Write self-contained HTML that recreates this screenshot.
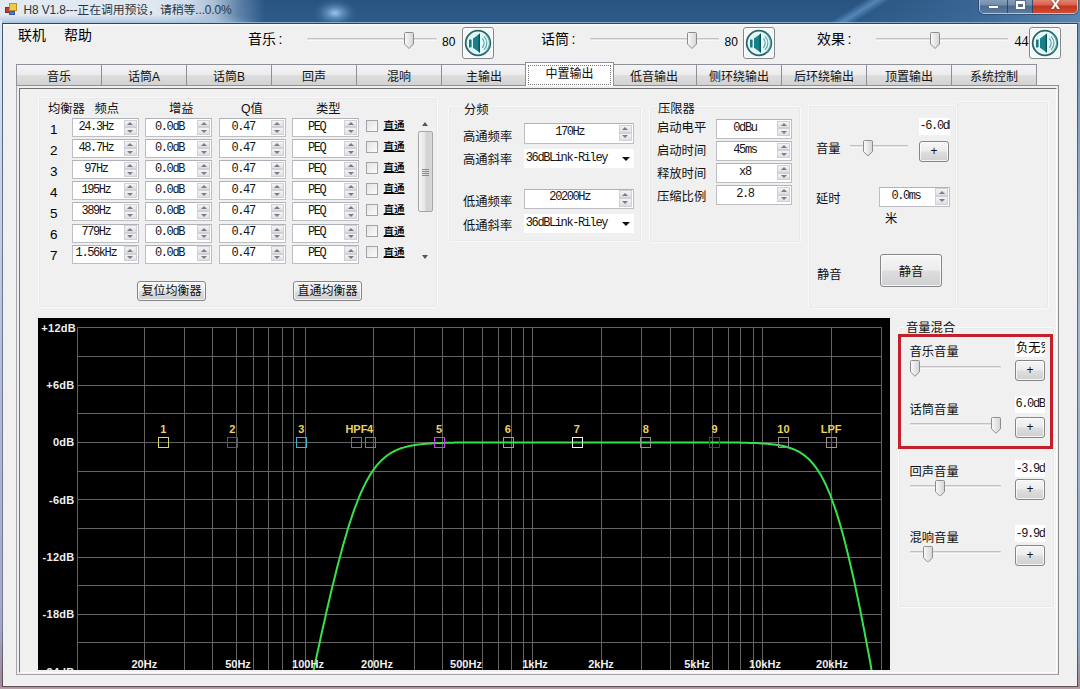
<!DOCTYPE html><html lang="zh-CN"><head><meta charset="utf-8"><title>H8 V1.8</title><style>
html,body{margin:0;padding:0}
body{width:1080px;height:689px;overflow:hidden;position:relative;background:#d9dde3;font-family:"Liberation Sans","Noto Sans CJK SC",sans-serif;font-size:12.3px;color:#000}
.a,body div,body span,body svg{position:absolute;box-sizing:border-box}
.l{white-space:nowrap;height:16px;line-height:16px;font-size:12.3px;color:#111}
.m{font-family:"Liberation Mono","Noto Sans CJK SC",monospace;font-size:12px;letter-spacing:-1.4px;white-space:nowrap;color:#151515}
.sp{background:#fff;border:1px solid #bcbec4;border-top-color:#b0b2b9}
.sp .v{left:0;top:0;height:14px;line-height:14px;text-align:center}
.sb{width:13px;height:8px;background:linear-gradient(#f4f4f6,#dfdfe3);border:1px solid #d0d0d6}
.sb i{position:absolute;left:2.5px;width:0;height:0;border-left:3px solid transparent;border-right:3px solid transparent}
.sb.u i{top:1.5px;border-bottom:3.5px solid #7c7c86}
.sb.d i{top:1.5px;border-top:3.5px solid #7c7c86}
.tab{top:63.5px;height:21.5px;width:86px;border:1px solid #8e9199;border-bottom:none;background:linear-gradient(#f4f4f4 0,#ececec 48%,#dedede 52%,#d2d2d2 100%);text-align:center;line-height:24px;font-size:12px;color:#111;white-space:nowrap}
.btn{border:1px solid #84868c;border-radius:3px;background:linear-gradient(#f6f6f6 0,#ececec 48%,#dedede 52%,#d0d0d0 100%);box-shadow:inset 0 0 0 1px rgba(255,255,255,.75);text-align:center;white-space:nowrap;color:#111}
.tr{height:3px;background:#e2e2e2;border-top:1px solid #c2c2c2;border-bottom:1px solid #f9f9f9;border-radius:1px}
.th{width:10px;height:17px}
.gb{border:1px solid #f9f9f9;box-shadow:0 0 0 1px #e9e9e9 inset;border-radius:2px}
.cb{width:12px;height:12px;border:1px solid #a0a3a8;background:linear-gradient(135deg,#e4e4e4,#fbfbfb)}
.tb{background:#fff;overflow:hidden}
.gl{font:bold 11px "Liberation Sans",sans-serif;fill:#f0f0f0}
.ml{font:bold 11px "Liberation Sans",sans-serif;fill:#ecd060}
</style></head><body>
<div style="left:0;top:0;width:1080px;height:689px;background:linear-gradient(180deg,#2a4f7a 0,#2b4c74 90px,#8c9aaa 220px,#cfd4da 420px,#e2e2e6 640px,#d9c7cc 689px)"></div>
<div style="left:0;top:0;width:1080px;height:24px;overflow:hidden;background:linear-gradient(180deg,#295481 0,#2b5886 60%,#2d5b8a 100%)"><div style="left:860px;top:0;width:220px;height:22px;background:linear-gradient(90deg,rgba(90,135,185,0) 0,rgba(90,135,185,.3) 50%,rgba(120,160,200,.6) 100%)"></div><div style="left:853px;top:-24px;width:14px;height:70px;transform:rotate(58deg);transform-origin:50% 50%;background:linear-gradient(90deg,rgba(110,165,215,0) 0,rgba(110,165,215,.6) 50%,rgba(110,165,215,0) 100%)"></div><div style="left:313px;top:-1px;width:44px;height:28px;background:radial-gradient(ellipse at center,rgba(160,205,240,.95) 0,rgba(130,180,225,.55) 25%,rgba(100,150,200,.2) 50%,rgba(100,150,200,0) 70%)"></div><div style="left:-10px;top:-2px;width:275px;height:27px;background:linear-gradient(90deg,#e3ebf3 0,#dfe8f1 60%,rgba(214,225,237,.96) 72%,rgba(190,207,226,.85) 82%,rgba(150,178,208,.5) 90%,rgba(110,150,195,0) 100%)"></div><div style="left:0;top:15px;width:255px;height:8px;background:linear-gradient(180deg,rgba(160,190,220,0) 0,rgba(160,190,220,.85) 100%);-webkit-mask-image:linear-gradient(90deg,#000 0,#000 80%,transparent 100%);mask-image:linear-gradient(90deg,#000 0,#000 80%,transparent 100%)"></div><div style="left:0;top:22px;width:1080px;height:1px;background:rgba(170,195,220,.75)"></div><div style="left:2px;top:23px;width:1076px;height:1px;background:#2a4666"></div></div>
<div style="left:0;top:686px;width:1080px;height:3px;background:linear-gradient(180deg,#5a4a54 0,#6a5860 30%,#b0959d 45%,#bca4ac 100%)"></div>
<div style="left:0;top:20px;width:2px;height:667px;background:linear-gradient(180deg,#dfe8f1 0,#ccd8e8 120px,#b4bcd8 350px,#a4a8cc 600px,#a08c9c 660px)"></div>
<div style="left:2px;top:23px;width:1px;height:664px;background:linear-gradient(180deg,#3a5676 0,#66788e 200px,#747c94 600px,#5a4a54 664px)"></div>
<div style="left:1078px;top:23px;width:2px;height:664px;background:linear-gradient(180deg,#6f92b6 0,#8aa4c2 120px,#a8b8cc 300px,#8eaac8 620px,#a08c98 660px)"></div>
<div style="left:1077px;top:23px;width:1px;height:664px;background:linear-gradient(180deg,#3a5070 0,#5a6c86 200px,#566a86 600px,#5a4a54 664px)"></div>
<div style="left:4px;top:3px;width:14px;height:13px"><div style="left:1px;top:4px;width:5px;height:6px;background:#b8402a;border:1px solid #8a2a18"></div><div style="left:5px;top:0;width:8px;height:8px;background:#eccb48;border:1px solid #b89030"></div><div style="left:5px;top:8px;width:6px;height:4px;background:#4a78cc;border:1px solid #3558a8"></div></div>
<div style="left:23.5px;top:2px;height:16px;line-height:16px;font-size:11.9px;letter-spacing:-0.1px;color:#2c3640;white-space:nowrap">H8 V1.8---正在调用预设，请稍等...0.0%</div>
<div style="left:979px;top:-4px;width:99px;height:18px;border:1px solid rgba(225,235,248,.7);border-radius:0 0 5px 5px;overflow:hidden;box-shadow:0 0 0 1px rgba(30,45,70,.45)"><div style="left:0;top:0;width:27.5px;height:18px;background:linear-gradient(#90a6c0 0,#718cab 45%,#4c6a90 50%,#5f7fa5 100%);border-right:1px solid rgba(35,50,80,.7)"><div style="left:8px;top:8px;width:11px;height:4px;background:#fff;border:1px solid #5a6c86;border-radius:1px"></div></div><div style="left:27.5px;top:0;width:25.5px;height:18px;background:linear-gradient(#90a6c0 0,#718cab 45%,#4c6a90 50%,#5f7fa5 100%);border-right:1px solid rgba(35,50,80,.7)"><div style="left:8px;top:4px;width:9px;height:8px;border:2px solid #fff;border-top-width:3px;background:#5a6c86;box-shadow:0 0 0 1px #5a6c86"></div></div><div style="left:53px;top:0;width:45px;height:18px;background:linear-gradient(#e59a8a 0,#d8604a 45%,#c4341e 50%,#d25436 100%)"><div style="left:0;top:-1px;width:45px;height:15px;text-align:center;color:#fff;font:bold 16px/15px 'Liberation Sans',sans-serif;text-shadow:0 0 2px #5a1a10">x</div></div></div>
<div style="left:3px;top:24px;width:1074px;height:662px;background:#f0f0f0"></div>
<div style="left:3px;top:24px;width:1074px;height:3px;background:linear-gradient(180deg,#fbfbfb,#f0f0f0)"></div>
<div style="left:18px;top:26px;height:18px;font-size:14px;line-height:18px;white-space:nowrap">联机</div>
<div style="left:64px;top:26px;height:18px;font-size:14px;line-height:18px;white-space:nowrap">帮助</div>
<div style="left:248px;top:30px;height:18px;font-size:14px;line-height:18px;white-space:nowrap;letter-spacing:0">音乐<span style="position:static;margin-left:2.5px">:</span></div>
<div class="tr" style="left:307px;top:37.8px;width:130px;height:3px;"></div><svg class="th" preserveAspectRatio="none" style="left:404px;top:32.4px;height:17px" viewBox="0 0 10 17"><defs><linearGradient id="tg" x1="0" x2="1"><stop offset="0" stop-color="#fafafa"/><stop offset="1" stop-color="#d4d4d4"/></linearGradient></defs><path d="M1.5 0.5h7a1 1 0 0 1 1 1v10.5l-4.5 4.5l-4.5-4.5v-10.5a1 1 0 0 1 1-1z" fill="url(#tg)" stroke="#8a8c92" stroke-width="1"/></svg>
<div style="left:442px;top:33.5px;height:16px;line-height:16px;white-space:nowrap;font-size:12px;">80</div>
<div class="btn" style="left:462px;top:27px;width:32px;height:32px;background:#f3f9f9;border-color:#85888a"><svg style="left:1px;top:1px" width="28" height="28" viewBox="-14 -14 28 28"><circle r="12.3" fill="#e2f7f7" stroke="#2c666a" stroke-width="1.8"/><rect x="-9" y="-3.6" width="2.6" height="8" rx="0.6" fill="#1c7880"/><path d="M-5 -4.4L2 -9.6V9.8L-5 4.8Z" fill="#17808a"/><path d="M0.6 -8.6L2 -9.6V9.8L0.6 8.8Z" fill="#0c5058"/><path d="M4.2 -4.6A6.5 6.5 0 0 1 4.2 4.8M6 -6.6A9.2 9.2 0 0 1 6 6.8M7.8 -8.4A11.6 11.6 0 0 1 7.8 8.6" fill="none" stroke="#5aa4a6" stroke-width="1.1"/></svg></div>
<div style="left:541px;top:30px;height:18px;font-size:14px;line-height:18px;white-space:nowrap;letter-spacing:0">话筒<span style="position:static;margin-left:2.5px">:</span></div>
<div class="tr" style="left:589.5px;top:37.8px;width:129.5px;height:3px;"></div><svg class="th" preserveAspectRatio="none" style="left:686.8px;top:32.4px;height:17px" viewBox="0 0 10 17"><defs><linearGradient id="tg" x1="0" x2="1"><stop offset="0" stop-color="#fafafa"/><stop offset="1" stop-color="#d4d4d4"/></linearGradient></defs><path d="M1.5 0.5h7a1 1 0 0 1 1 1v10.5l-4.5 4.5l-4.5-4.5v-10.5a1 1 0 0 1 1-1z" fill="url(#tg)" stroke="#8a8c92" stroke-width="1"/></svg>
<div style="left:724.5px;top:33.5px;height:16px;line-height:16px;white-space:nowrap;font-size:12px;">80</div>
<div class="btn" style="left:742.5px;top:27px;width:32px;height:32px;background:#f3f9f9;border-color:#85888a"><svg style="left:1px;top:1px" width="28" height="28" viewBox="-14 -14 28 28"><circle r="12.3" fill="#e2f7f7" stroke="#2c666a" stroke-width="1.8"/><rect x="-9" y="-3.6" width="2.6" height="8" rx="0.6" fill="#1c7880"/><path d="M-5 -4.4L2 -9.6V9.8L-5 4.8Z" fill="#17808a"/><path d="M0.6 -8.6L2 -9.6V9.8L0.6 8.8Z" fill="#0c5058"/><path d="M4.2 -4.6A6.5 6.5 0 0 1 4.2 4.8M6 -6.6A9.2 9.2 0 0 1 6 6.8M7.8 -8.4A11.6 11.6 0 0 1 7.8 8.6" fill="none" stroke="#5aa4a6" stroke-width="1.1"/></svg></div>
<div style="left:817px;top:30px;height:18px;font-size:14px;line-height:18px;white-space:nowrap;letter-spacing:0">效果<span style="position:static;margin-left:2.5px">:</span></div>
<div class="tr" style="left:876px;top:37.8px;width:131.5px;height:3px;"></div><svg class="th" preserveAspectRatio="none" style="left:929.5px;top:32.4px;height:17px" viewBox="0 0 10 17"><defs><linearGradient id="tg" x1="0" x2="1"><stop offset="0" stop-color="#fafafa"/><stop offset="1" stop-color="#d4d4d4"/></linearGradient></defs><path d="M1.5 0.5h7a1 1 0 0 1 1 1v10.5l-4.5 4.5l-4.5-4.5v-10.5a1 1 0 0 1 1-1z" fill="url(#tg)" stroke="#8a8c92" stroke-width="1"/></svg>
<div style="left:1014.5px;top:34px;height:16px;line-height:16px;white-space:nowrap;font-family:'Liberation Serif',serif;font-size:14px;">44</div>
<div class="btn" style="left:1029px;top:27px;width:32px;height:32px;background:#f3f9f9;border-color:#85888a"><svg style="left:1px;top:1px" width="28" height="28" viewBox="-14 -14 28 28"><circle r="12.3" fill="#e2f7f7" stroke="#2c666a" stroke-width="1.8"/><rect x="-9" y="-3.6" width="2.6" height="8" rx="0.6" fill="#1c7880"/><path d="M-5 -4.4L2 -9.6V9.8L-5 4.8Z" fill="#17808a"/><path d="M0.6 -8.6L2 -9.6V9.8L0.6 8.8Z" fill="#0c5058"/><path d="M4.2 -4.6A6.5 6.5 0 0 1 4.2 4.8M6 -6.6A9.2 9.2 0 0 1 6 6.8M7.8 -8.4A11.6 11.6 0 0 1 7.8 8.6" fill="none" stroke="#5aa4a6" stroke-width="1.1"/></svg></div>
<div style="left:16px;top:85px;width:1043px;height:590px;border:1px solid #a2a5ab;border-top-color:#8e9199;border-right-color:#8a8c92;background:#f0f0f0"></div>
<div class="tab" style="left:16px">音乐</div>
<div class="tab" style="left:101px">话筒A</div>
<div class="tab" style="left:186px">话筒B</div>
<div class="tab" style="left:271px">回声</div>
<div class="tab" style="left:356px">混响</div>
<div class="tab" style="left:441px">主输出</div>
<div class="tab" style="left:611px">低音输出</div>
<div class="tab" style="left:696px">侧环绕输出</div>
<div class="tab" style="left:781px">后环绕输出</div>
<div class="tab" style="left:866px">顶置输出</div>
<div class="tab" style="left:951px">系统控制</div>
<div class="tab" style="left:525px;top:62px;width:89px;height:24px;background:#fff;line-height:23px;z-index:2"><div style="left:2px;top:2px;right:2px;bottom:1px;border:1px dotted #777"></div>中置输出</div>
<div style="left:19px;top:88px;width:1038px;height:585px;border:1px solid #fcfcfc;border-top:1px solid #727272;border-left:1px solid #747474;background:#f0f0f0"></div>
<div class="gb" style="left:38px;top:97px;width:400px;height:211px"></div>
<div class="l" style="left:48px;top:100.6px;">均衡器</div>
<div class="l" style="left:94.5px;top:100.6px;">频点</div>
<div class="l" style="left:169px;top:100.6px;">增益</div>
<div class="l" style="left:241px;top:100.6px;">Q值</div>
<div class="l" style="left:316px;top:100.6px;">类型</div>
<div style="left:50px;top:121.7px;height:16px;font-size:13.5px;line-height:16px">1</div>
<div class="sp" style="left:71.5px;top:118px;width:67px;height:19px;"><div class="v m" style="left:-1.6px;top:0.6px;width:50px;">24.3Hz</div><div class="sb u" style="right:1px;top:0.6px;height:7.5px"><i></i></div><div class="sb d" style="right:1px;top:8.1px;height:7.5px"><i></i></div></div>
<div class="sp" style="left:145.1px;top:118px;width:67px;height:19px;"><div class="v m" style="left:-1.6px;top:0.6px;width:50px;">0.0dB</div><div class="sb u" style="right:1px;top:0.6px;height:7.5px"><i></i></div><div class="sb d" style="right:1px;top:8.1px;height:7.5px"><i></i></div></div>
<div class="sp" style="left:218.7px;top:118px;width:67px;height:19px;"><div class="v m" style="left:-1.6px;top:0.6px;width:50px;">0.47</div><div class="sb u" style="right:1px;top:0.6px;height:7.5px"><i></i></div><div class="sb d" style="right:1px;top:8.1px;height:7.5px"><i></i></div></div>
<div class="sp" style="left:292.3px;top:118px;width:67px;height:19px;"><div class="v m" style="left:-1.6px;top:0.6px;width:50px;">PEQ</div><div class="sb u" style="right:1px;top:0.6px;height:7.5px"><i></i></div><div class="sb d" style="right:1px;top:8.1px;height:7.5px"><i></i></div></div>
<div class="cb" style="left:366px;top:119.5px;"></div>
<div style="left:383.5px;top:117px;height:16px;font-size:10.6px;font-weight:500;line-height:16px;text-decoration:underline;white-space:nowrap">直通</div>
<div style="left:50px;top:142.8px;height:16px;font-size:13.5px;line-height:16px">2</div>
<div class="sp" style="left:71.5px;top:139.1px;width:67px;height:19px;"><div class="v m" style="left:-1.6px;top:0.6px;width:50px;">48.7Hz</div><div class="sb u" style="right:1px;top:0.6px;height:7.5px"><i></i></div><div class="sb d" style="right:1px;top:8.1px;height:7.5px"><i></i></div></div>
<div class="sp" style="left:145.1px;top:139.1px;width:67px;height:19px;"><div class="v m" style="left:-1.6px;top:0.6px;width:50px;">0.0dB</div><div class="sb u" style="right:1px;top:0.6px;height:7.5px"><i></i></div><div class="sb d" style="right:1px;top:8.1px;height:7.5px"><i></i></div></div>
<div class="sp" style="left:218.7px;top:139.1px;width:67px;height:19px;"><div class="v m" style="left:-1.6px;top:0.6px;width:50px;">0.47</div><div class="sb u" style="right:1px;top:0.6px;height:7.5px"><i></i></div><div class="sb d" style="right:1px;top:8.1px;height:7.5px"><i></i></div></div>
<div class="sp" style="left:292.3px;top:139.1px;width:67px;height:19px;"><div class="v m" style="left:-1.6px;top:0.6px;width:50px;">PEQ</div><div class="sb u" style="right:1px;top:0.6px;height:7.5px"><i></i></div><div class="sb d" style="right:1px;top:8.1px;height:7.5px"><i></i></div></div>
<div class="cb" style="left:366px;top:140.6px;"></div>
<div style="left:383.5px;top:138.1px;height:16px;font-size:10.6px;font-weight:500;line-height:16px;text-decoration:underline;white-space:nowrap">直通</div>
<div style="left:50px;top:163.9px;height:16px;font-size:13.5px;line-height:16px">3</div>
<div class="sp" style="left:71.5px;top:160.2px;width:67px;height:19px;"><div class="v m" style="left:-1.6px;top:0.6px;width:50px;">97Hz</div><div class="sb u" style="right:1px;top:0.6px;height:7.5px"><i></i></div><div class="sb d" style="right:1px;top:8.1px;height:7.5px"><i></i></div></div>
<div class="sp" style="left:145.1px;top:160.2px;width:67px;height:19px;"><div class="v m" style="left:-1.6px;top:0.6px;width:50px;">0.0dB</div><div class="sb u" style="right:1px;top:0.6px;height:7.5px"><i></i></div><div class="sb d" style="right:1px;top:8.1px;height:7.5px"><i></i></div></div>
<div class="sp" style="left:218.7px;top:160.2px;width:67px;height:19px;"><div class="v m" style="left:-1.6px;top:0.6px;width:50px;">0.47</div><div class="sb u" style="right:1px;top:0.6px;height:7.5px"><i></i></div><div class="sb d" style="right:1px;top:8.1px;height:7.5px"><i></i></div></div>
<div class="sp" style="left:292.3px;top:160.2px;width:67px;height:19px;"><div class="v m" style="left:-1.6px;top:0.6px;width:50px;">PEQ</div><div class="sb u" style="right:1px;top:0.6px;height:7.5px"><i></i></div><div class="sb d" style="right:1px;top:8.1px;height:7.5px"><i></i></div></div>
<div class="cb" style="left:366px;top:161.7px;"></div>
<div style="left:383.5px;top:159.2px;height:16px;font-size:10.6px;font-weight:500;line-height:16px;text-decoration:underline;white-space:nowrap">直通</div>
<div style="left:50px;top:185px;height:16px;font-size:13.5px;line-height:16px">4</div>
<div class="sp" style="left:71.5px;top:181.3px;width:67px;height:19px;"><div class="v m" style="left:-1.6px;top:0.6px;width:50px;">195Hz</div><div class="sb u" style="right:1px;top:0.6px;height:7.5px"><i></i></div><div class="sb d" style="right:1px;top:8.1px;height:7.5px"><i></i></div></div>
<div class="sp" style="left:145.1px;top:181.3px;width:67px;height:19px;"><div class="v m" style="left:-1.6px;top:0.6px;width:50px;">0.0dB</div><div class="sb u" style="right:1px;top:0.6px;height:7.5px"><i></i></div><div class="sb d" style="right:1px;top:8.1px;height:7.5px"><i></i></div></div>
<div class="sp" style="left:218.7px;top:181.3px;width:67px;height:19px;"><div class="v m" style="left:-1.6px;top:0.6px;width:50px;">0.47</div><div class="sb u" style="right:1px;top:0.6px;height:7.5px"><i></i></div><div class="sb d" style="right:1px;top:8.1px;height:7.5px"><i></i></div></div>
<div class="sp" style="left:292.3px;top:181.3px;width:67px;height:19px;"><div class="v m" style="left:-1.6px;top:0.6px;width:50px;">PEQ</div><div class="sb u" style="right:1px;top:0.6px;height:7.5px"><i></i></div><div class="sb d" style="right:1px;top:8.1px;height:7.5px"><i></i></div></div>
<div class="cb" style="left:366px;top:182.8px;"></div>
<div style="left:383.5px;top:180.3px;height:16px;font-size:10.6px;font-weight:500;line-height:16px;text-decoration:underline;white-space:nowrap">直通</div>
<div style="left:50px;top:206.1px;height:16px;font-size:13.5px;line-height:16px">5</div>
<div class="sp" style="left:71.5px;top:202.4px;width:67px;height:19px;"><div class="v m" style="left:-1.6px;top:0.6px;width:50px;">389Hz</div><div class="sb u" style="right:1px;top:0.6px;height:7.5px"><i></i></div><div class="sb d" style="right:1px;top:8.1px;height:7.5px"><i></i></div></div>
<div class="sp" style="left:145.1px;top:202.4px;width:67px;height:19px;"><div class="v m" style="left:-1.6px;top:0.6px;width:50px;">0.0dB</div><div class="sb u" style="right:1px;top:0.6px;height:7.5px"><i></i></div><div class="sb d" style="right:1px;top:8.1px;height:7.5px"><i></i></div></div>
<div class="sp" style="left:218.7px;top:202.4px;width:67px;height:19px;"><div class="v m" style="left:-1.6px;top:0.6px;width:50px;">0.47</div><div class="sb u" style="right:1px;top:0.6px;height:7.5px"><i></i></div><div class="sb d" style="right:1px;top:8.1px;height:7.5px"><i></i></div></div>
<div class="sp" style="left:292.3px;top:202.4px;width:67px;height:19px;"><div class="v m" style="left:-1.6px;top:0.6px;width:50px;">PEQ</div><div class="sb u" style="right:1px;top:0.6px;height:7.5px"><i></i></div><div class="sb d" style="right:1px;top:8.1px;height:7.5px"><i></i></div></div>
<div class="cb" style="left:366px;top:203.9px;"></div>
<div style="left:383.5px;top:201.4px;height:16px;font-size:10.6px;font-weight:500;line-height:16px;text-decoration:underline;white-space:nowrap">直通</div>
<div style="left:50px;top:227.2px;height:16px;font-size:13.5px;line-height:16px">6</div>
<div class="sp" style="left:71.5px;top:223.5px;width:67px;height:19px;"><div class="v m" style="left:-1.6px;top:0.6px;width:50px;">779Hz</div><div class="sb u" style="right:1px;top:0.6px;height:7.5px"><i></i></div><div class="sb d" style="right:1px;top:8.1px;height:7.5px"><i></i></div></div>
<div class="sp" style="left:145.1px;top:223.5px;width:67px;height:19px;"><div class="v m" style="left:-1.6px;top:0.6px;width:50px;">0.0dB</div><div class="sb u" style="right:1px;top:0.6px;height:7.5px"><i></i></div><div class="sb d" style="right:1px;top:8.1px;height:7.5px"><i></i></div></div>
<div class="sp" style="left:218.7px;top:223.5px;width:67px;height:19px;"><div class="v m" style="left:-1.6px;top:0.6px;width:50px;">0.47</div><div class="sb u" style="right:1px;top:0.6px;height:7.5px"><i></i></div><div class="sb d" style="right:1px;top:8.1px;height:7.5px"><i></i></div></div>
<div class="sp" style="left:292.3px;top:223.5px;width:67px;height:19px;"><div class="v m" style="left:-1.6px;top:0.6px;width:50px;">PEQ</div><div class="sb u" style="right:1px;top:0.6px;height:7.5px"><i></i></div><div class="sb d" style="right:1px;top:8.1px;height:7.5px"><i></i></div></div>
<div class="cb" style="left:366px;top:225px;"></div>
<div style="left:383.5px;top:222.5px;height:16px;font-size:10.6px;font-weight:500;line-height:16px;text-decoration:underline;white-space:nowrap">直通</div>
<div style="left:50px;top:248.3px;height:16px;font-size:13.5px;line-height:16px">7</div>
<div class="sp" style="left:71.5px;top:244.6px;width:67px;height:19px;"><div class="v m" style="left:-1.6px;top:0.6px;width:50px;">1.56kHz</div><div class="sb u" style="right:1px;top:0.6px;height:7.5px"><i></i></div><div class="sb d" style="right:1px;top:8.1px;height:7.5px"><i></i></div></div>
<div class="sp" style="left:145.1px;top:244.6px;width:67px;height:19px;"><div class="v m" style="left:-1.6px;top:0.6px;width:50px;">0.0dB</div><div class="sb u" style="right:1px;top:0.6px;height:7.5px"><i></i></div><div class="sb d" style="right:1px;top:8.1px;height:7.5px"><i></i></div></div>
<div class="sp" style="left:218.7px;top:244.6px;width:67px;height:19px;"><div class="v m" style="left:-1.6px;top:0.6px;width:50px;">0.47</div><div class="sb u" style="right:1px;top:0.6px;height:7.5px"><i></i></div><div class="sb d" style="right:1px;top:8.1px;height:7.5px"><i></i></div></div>
<div class="sp" style="left:292.3px;top:244.6px;width:67px;height:19px;"><div class="v m" style="left:-1.6px;top:0.6px;width:50px;">PEQ</div><div class="sb u" style="right:1px;top:0.6px;height:7.5px"><i></i></div><div class="sb d" style="right:1px;top:8.1px;height:7.5px"><i></i></div></div>
<div class="cb" style="left:366px;top:246.1px;"></div>
<div style="left:383.5px;top:243.6px;height:16px;font-size:10.6px;font-weight:500;line-height:16px;text-decoration:underline;white-space:nowrap">直通</div>
<div style="left:418px;top:117px;width:15px;height:148px"><div style="left:4px;top:5px;width:0;height:0;border-left:3.5px solid transparent;border-right:3.5px solid transparent;border-bottom:4px solid #555"></div><div style="left:0;top:14px;width:15px;height:81px;border:1px solid #a4a6aa;border-radius:2px;background:linear-gradient(90deg,#f4f4f4 0,#e6e6e6 45%,#d2d2d2 55%,#d8d8d8 100%)"><div style="left:3px;top:37px;width:7px;height:1px;background:#8a8a8a;box-shadow:0 2px 0 #8a8a8a,0 4px 0 #8a8a8a,0 6px 0 #8a8a8a"></div></div><div style="left:4px;top:138px;width:0;height:0;border-left:3.5px solid transparent;border-right:3.5px solid transparent;border-top:4px solid #555"></div></div>
<div class="btn" style="left:137px;top:280.5px;width:69px;height:20px;line-height:18.5px;font-size:12px">复位均衡器</div>
<div class="btn" style="left:293px;top:280.5px;width:69px;height:20px;line-height:18.5px;font-size:12px">直通均衡器</div>
<div class="gb" style="left:448px;top:106px;width:194px;height:136px"></div>
<div class="l" style="left:463px;top:101.6px;background:#f0f0f0;padding:0 1px">分频</div>
<div class="l" style="left:463px;top:128.6px;">高通频率</div>
<div class="sp" style="left:524px;top:123px;width:109.5px;height:20.5px;"><div class="v m" style="left:-1.6px;top:0.6px;width:92.5px;">170Hz</div><div class="sb u" style="right:1px;top:0.6px;height:8.25px"><i></i></div><div class="sb d" style="right:1px;top:8.85px;height:8.25px"><i></i></div></div>
<div class="l" style="left:463px;top:152.1px;">高通斜率</div>
<div class="tb" style="left:524px;top:149px;width:109.5px;height:18.5px"><div class="m" style="left:1.8px;top:1.5px;height:14px;line-height:14px">36dBLink-Riley</div><div style="left:97.5px;top:7.5px;width:0;height:0;border-left:4px solid transparent;border-right:4px solid transparent;border-top:4.5px solid #111"></div></div>
<div class="l" style="left:463px;top:193.6px;">低通频率</div>
<div class="sp" style="left:524px;top:188.5px;width:109.5px;height:20.5px;"><div class="v m" style="left:-1.6px;top:0.6px;width:92.5px;">20200Hz</div><div class="sb u" style="right:1px;top:0.6px;height:8.25px"><i></i></div><div class="sb d" style="right:1px;top:8.85px;height:8.25px"><i></i></div></div>
<div class="l" style="left:463px;top:217.6px;">低通斜率</div>
<div class="tb" style="left:524px;top:214px;width:109.5px;height:18.5px"><div class="m" style="left:1.8px;top:1.5px;height:14px;line-height:14px">36dBLink-Riley</div><div style="left:97.5px;top:7.5px;width:0;height:0;border-left:4px solid transparent;border-right:4px solid transparent;border-top:4.5px solid #111"></div></div>
<div class="gb" style="left:649px;top:106px;width:152px;height:136.5px"></div>
<div class="l" style="left:657px;top:101.1px;background:#f0f0f0;padding:0 1px">压限器</div>
<div class="l" style="left:657px;top:120.1px;">启动电平</div>
<div class="sp" style="left:716px;top:119px;width:76px;height:19.5px;"><div class="v m" style="left:-1.6px;top:0.6px;width:59px;">0dBu</div><div class="sb u" style="right:1px;top:0.6px;height:7.75px"><i></i></div><div class="sb d" style="right:1px;top:8.35px;height:7.75px"><i></i></div></div>
<div class="l" style="left:657px;top:143.1px;">启动时间</div>
<div class="sp" style="left:716px;top:141.1px;width:76px;height:19.5px;"><div class="v m" style="left:-1.6px;top:0.6px;width:59px;">45ms</div><div class="sb u" style="right:1px;top:0.6px;height:7.75px"><i></i></div><div class="sb d" style="right:1px;top:8.35px;height:7.75px"><i></i></div></div>
<div class="l" style="left:657px;top:165.6px;">释放时间</div>
<div class="sp" style="left:716px;top:163.2px;width:76px;height:19.5px;"><div class="v m" style="left:-1.6px;top:0.6px;width:59px;">x8</div><div class="sb u" style="right:1px;top:0.6px;height:7.75px"><i></i></div><div class="sb d" style="right:1px;top:8.35px;height:7.75px"><i></i></div></div>
<div class="l" style="left:657px;top:189.1px;">压缩比例</div>
<div class="sp" style="left:716px;top:185.3px;width:76px;height:19.5px;"><div class="v m" style="left:-1.6px;top:0.6px;width:59px;">2.8</div><div class="sb u" style="right:1px;top:0.6px;height:7.75px"><i></i></div><div class="sb d" style="right:1px;top:8.35px;height:7.75px"><i></i></div></div>
<div class="gb" style="left:808px;top:105px;width:149px;height:204px"></div>
<div class="gb" style="left:957px;top:101px;width:92px;height:208px;border-left:none"></div>
<div class="l" style="left:816px;top:140.6px;">音量</div>
<div class="tr" style="left:850px;top:145px;width:58px;height:3px;"></div><svg class="th" preserveAspectRatio="none" style="left:862.6px;top:140px;height:16.4px" viewBox="0 0 10 17"><defs><linearGradient id="tg" x1="0" x2="1"><stop offset="0" stop-color="#fafafa"/><stop offset="1" stop-color="#d4d4d4"/></linearGradient></defs><path d="M1.5 0.5h7a1 1 0 0 1 1 1v10.5l-4.5 4.5l-4.5-4.5v-10.5a1 1 0 0 1 1-1z" fill="url(#tg)" stroke="#8a8c92" stroke-width="1"/></svg>
<div class="tb" style="left:919px;top:118px;width:30.5px;height:17px"><div class="m" style="left:0.5px;top:1px;height:14px;line-height:14px">-6.0dB</div></div>
<div class="btn" style="left:919px;top:140.5px;width:30px;height:21px;line-height:18px;font-size:12px">+</div>
<div class="l" style="left:816px;top:190.6px;">延时</div>
<div class="sp" style="left:879px;top:186.7px;width:71px;height:20.3px;"><div class="v m" style="left:-1.1px;top:1px;width:54px;">0.0ms</div><div class="sb u" style="right:1px;top:0.6px;height:8.15px"><i></i></div><div class="sb d" style="right:1px;top:8.75px;height:8.15px"><i></i></div></div>
<div class="l" style="left:885px;top:210.6px;">米</div>
<div class="l" style="left:817px;top:266.9px;">静音</div>
<div class="btn" style="left:880px;top:253.7px;width:62px;height:33px;line-height:35px;font-size:12.3px">静音</div>
<svg style="left:38px;top:318px" width="852" height="352" viewBox="0 0 852 352"><rect width="852" height="352" fill="#000"/><path d="M39.5 9V352M106.5 9V352M146.5 9V352M174.5 9V352M198.5 9V352M215.5 9V352M230.5 9V352M244.5 9V352M255.5 9V352M267.5 9V352M335.5 9V352M376.5 9V352M404.5 9V352M425.5 9V352M444.5 9V352M460.5 9V352M473.5 9V352M485.5 9V352M494.5 9V352M563.5 9V352M603.5 9V352M632.5 9V352M655.5 9V352M674.5 9V352M690.5 9V352M702.5 9V352M715.5 9V352M724.5 9V352M793.5 9V352M843.5 9V352M39 9.5H844M39 38.5H844M39 67.5H844M39 95.5H844M39 124.5H844M39 153.5H844M39 181.5H844M39 210.5H844M39 239.5H844M39 267.5H844M39 296.5H844M39 324.5H844M39 353.5H844" stroke="#646464" stroke-width="1" fill="none" shape-rendering="crispEdges"/><path d="M275.5 353.0L276.9 346.1L278.4 339.2L279.9 332.4L281.4 325.7L282.8 319.0L284.3 312.3L285.8 305.7L287.3 299.2L288.7 292.7L290.2 286.4L291.7 280.1L293.1 273.8L294.6 267.7L296.1 261.7L297.6 255.8L299.0 250.0L300.5 244.3L302.0 238.7L303.5 233.2L304.9 227.9L306.4 222.7L307.9 217.6L309.3 212.7L310.8 207.9L312.3 203.3L313.8 198.9L315.2 194.6L316.7 190.4L318.2 186.5L319.7 182.7L321.1 179.0L322.6 175.5L324.1 172.2L325.5 169.1L327.0 166.1L328.5 163.2L330.0 160.5L331.4 158.0L332.9 155.6L334.4 153.4L335.9 151.3L337.3 149.3L338.8 147.4L340.3 145.7L341.8 144.1L343.2 142.6L344.7 141.2L346.2 139.9L347.6 138.7L349.1 137.5L350.6 136.5L352.1 135.5L353.5 134.6L355.0 133.8L356.5 133.0L358.0 132.3L359.4 131.7L360.9 131.1L362.4 130.5L363.8 130.0L365.3 129.6L366.8 129.1L368.3 128.8L369.7 128.4L371.2 128.1L372.7 127.8L374.2 127.5L375.6 127.2L377.1 127.0L378.6 126.8L380.1 126.6L381.5 126.4L383.0 126.2L384.5 126.1L385.9 125.9L387.4 125.8L388.9 125.7L390.4 125.6L391.8 125.5L393.3 125.4L394.8 125.3L396.3 125.2L397.7 125.1L399.2 125.1L400.7 125.0L402.1 125.0L403.6 124.9L405.1 124.9L406.6 124.8L408.0 124.8L409.5 124.8L411.0 124.7L412.5 124.7L413.9 124.7L415.4 124.7L416.9 124.6L418.3 124.6L419.8 124.6L421.3 124.6L422.8 124.6L424.2 124.6L425.7 124.5L427.2 124.5L428.7 124.5L430.1 124.5L431.6 124.5L433.1 124.5L434.6 124.5L436.0 124.5L437.5 124.5L439.0 124.5L440.4 124.5L441.9 124.5L443.4 124.4L444.9 124.4L446.3 124.4L447.8 124.4L449.3 124.4L450.8 124.4L452.2 124.4L453.7 124.4L455.2 124.4L456.6 124.4L458.1 124.4L459.6 124.4L461.1 124.4L462.5 124.4L464.0 124.4L465.5 124.4L467.0 124.4L468.4 124.4L469.9 124.4L471.4 124.4L472.9 124.4L474.3 124.4L475.8 124.4L477.3 124.4L478.7 124.4L480.2 124.4L481.7 124.4L483.2 124.4L484.6 124.4L486.1 124.4L487.6 124.4L489.1 124.4L490.5 124.4L492.0 124.4L493.5 124.4L494.9 124.4L496.4 124.4L497.9 124.4L499.4 124.4L500.8 124.4L502.3 124.4L503.8 124.4L505.3 124.4L506.7 124.4L508.2 124.4L509.7 124.4L511.1 124.4L512.6 124.4L514.1 124.4L515.6 124.4L517.0 124.4L518.5 124.4L520.0 124.4L521.5 124.4L522.9 124.4L524.4 124.4L525.9 124.4L527.4 124.4L528.8 124.4L530.3 124.4L531.8 124.4L533.2 124.4L534.7 124.4L536.2 124.4L537.7 124.4L539.1 124.4L540.6 124.4L542.1 124.4L543.6 124.4L545.0 124.4L546.5 124.4L548.0 124.4L549.4 124.4L550.9 124.4L552.4 124.4L553.9 124.4L555.3 124.4L556.8 124.4L558.3 124.4L559.8 124.4L561.2 124.4L562.7 124.4L564.2 124.4L565.7 124.4L567.1 124.4L568.6 124.4L570.1 124.4L571.5 124.4L573.0 124.4L574.5 124.4L576.0 124.4L577.4 124.4L578.9 124.4L580.4 124.4L581.9 124.4L583.3 124.4L584.8 124.4L586.3 124.4L587.7 124.4L589.2 124.4L590.7 124.4L592.2 124.4L593.6 124.4L595.1 124.4L596.6 124.4L598.1 124.4L599.5 124.4L601.0 124.4L602.5 124.4L603.9 124.4L605.4 124.4L606.9 124.4L608.4 124.4L609.8 124.4L611.3 124.4L612.8 124.4L614.3 124.4L615.7 124.4L617.2 124.4L618.7 124.4L620.2 124.4L621.6 124.4L623.1 124.4L624.6 124.4L626.0 124.4L627.5 124.4L629.0 124.4L630.5 124.4L631.9 124.4L633.4 124.4L634.9 124.4L636.4 124.4L637.8 124.4L639.3 124.4L640.8 124.4L642.2 124.4L643.7 124.4L645.2 124.4L646.7 124.4L648.1 124.4L649.6 124.4L651.1 124.4L652.6 124.4L654.0 124.4L655.5 124.4L657.0 124.4L658.5 124.4L659.9 124.4L661.4 124.4L662.9 124.4L664.3 124.4L665.8 124.4L667.3 124.4L668.8 124.4L670.2 124.4L671.7 124.4L673.2 124.4L674.7 124.4L676.1 124.5L677.6 124.5L679.1 124.5L680.5 124.5L682.0 124.5L683.5 124.5L685.0 124.5L686.4 124.5L687.9 124.5L689.4 124.5L690.9 124.5L692.3 124.5L693.8 124.6L695.3 124.6L696.7 124.6L698.2 124.6L699.7 124.6L701.2 124.6L702.6 124.7L704.1 124.7L705.6 124.7L707.1 124.8L708.5 124.8L710.0 124.8L711.5 124.9L713.0 124.9L714.4 125.0L715.9 125.0L717.4 125.1L718.8 125.1L720.3 125.2L721.8 125.3L723.3 125.4L724.7 125.5L726.2 125.6L727.7 125.7L729.2 125.8L730.6 125.9L732.1 126.0L733.6 126.2L735.0 126.4L736.5 126.6L738.0 126.8L739.5 127.0L740.9 127.2L742.4 127.5L743.9 127.8L745.4 128.1L746.8 128.4L748.3 128.8L749.8 129.2L751.3 129.7L752.7 130.2L754.2 130.7L755.7 131.3L757.1 131.9L758.6 132.6L760.1 133.4L761.6 134.2L763.0 135.1L764.5 136.1L766.0 137.1L767.5 138.3L768.9 139.5L770.4 140.8L771.9 142.3L773.3 143.8L774.8 145.5L776.3 147.3L777.8 149.3L779.2 151.4L780.7 153.6L782.2 156.0L783.7 158.6L785.1 161.3L786.6 164.2L788.1 167.3L789.5 170.6L791.0 174.1L792.5 177.7L794.0 181.6L795.4 185.7L796.9 189.9L798.4 194.4L799.9 199.1L801.3 203.9L802.8 209.0L804.3 214.3L805.8 219.7L807.2 225.3L808.7 231.2L810.2 237.2L811.6 243.3L813.1 249.7L814.6 256.2L816.1 262.8L817.5 269.6L819.0 276.6L820.5 283.7L822.0 290.9L823.4 298.3L824.9 305.7L826.4 313.3L827.8 321.0L829.3 328.9L830.8 336.8L832.3 344.8L833.7 353.0" stroke="#36e24c" stroke-width="2" fill="none" stroke-linejoin="round"/><rect x="120.5" y="119.5" width="10" height="10" fill="none" stroke="#d6d66a" stroke-width="1" shape-rendering="crispEdges"/><rect x="189.5" y="119.5" width="10" height="10" fill="none" stroke="#cf2233" stroke-width="1" shape-rendering="crispEdges"/><rect x="258.5" y="119.5" width="10" height="10" fill="none" stroke="#3fb0cf" stroke-width="1" shape-rendering="crispEdges"/><rect x="313.5" y="119.5" width="10" height="10" fill="none" stroke="#c23fc2" stroke-width="1" shape-rendering="crispEdges"/><rect x="327.5" y="119.5" width="10" height="10" fill="none" stroke="#3f9f4f" stroke-width="1" shape-rendering="crispEdges"/><rect x="396.5" y="119.5" width="10" height="10" fill="none" stroke="#cf3fdf" stroke-width="1" shape-rendering="crispEdges"/><rect x="465.5" y="119.5" width="10" height="10" fill="none" stroke="#c09494" stroke-width="1" shape-rendering="crispEdges"/><rect x="534.5" y="119.5" width="10" height="10" fill="none" stroke="#f4f4f4" stroke-width="1" shape-rendering="crispEdges"/><rect x="602.5" y="119.5" width="10" height="10" fill="none" stroke="#8f8f8f" stroke-width="1" shape-rendering="crispEdges"/><rect x="671.5" y="119.5" width="10" height="10" fill="none" stroke="#7a2450" stroke-width="1" shape-rendering="crispEdges"/><rect x="740.5" y="119.5" width="10" height="10" fill="none" stroke="#8f8f97" stroke-width="1" shape-rendering="crispEdges"/><rect x="788.5" y="119.5" width="10" height="10" fill="none" stroke="#9f8f8f" stroke-width="1" shape-rendering="crispEdges"/><text class="ml" x="125.4" y="114.8" text-anchor="middle">1</text><text class="ml" x="194.3" y="114.8" text-anchor="middle">2</text><text class="ml" x="263.2" y="114.8" text-anchor="middle">3</text><text class="ml" x="318.4" y="114.8" text-anchor="middle">HPF</text><text class="ml" x="332.1" y="114.8" text-anchor="middle">4</text><text class="ml" x="401" y="114.8" text-anchor="middle">5</text><text class="ml" x="469.9" y="114.8" text-anchor="middle">6</text><text class="ml" x="538.8" y="114.8" text-anchor="middle">7</text><text class="ml" x="607.7" y="114.8" text-anchor="middle">8</text><text class="ml" x="676.5" y="114.8" text-anchor="middle">9</text><text class="ml" x="745.4" y="114.8" text-anchor="middle">10</text><text class="ml" x="793.2" y="114.8" text-anchor="middle">LPF</text><text class="gl" style="letter-spacing:0.3px" x="38.1" y="13.8" text-anchor="end">+12dB</text><text class="gl" style="letter-spacing:0.3px" x="36.6" y="71.1" text-anchor="end">+6dB</text><text class="gl" style="letter-spacing:0.3px" x="36.6" y="128.4" text-anchor="end">0dB</text><text class="gl" style="letter-spacing:0.3px" x="36.6" y="185.7" text-anchor="end">-6dB</text><text class="gl" style="letter-spacing:0.3px" x="36.6" y="243" text-anchor="end">-12dB</text><text class="gl" style="letter-spacing:0.3px" x="36.6" y="300.3" text-anchor="end">-18dB</text><text class="gl" style="letter-spacing:0.3px" x="36.6" y="357.6" text-anchor="end">-24dB</text><text class="gl" x="106.3" y="349.6" text-anchor="middle">20Hz</text><text class="gl" x="200" y="349.6" text-anchor="middle">50Hz</text><text class="gl" x="270" y="349.6" text-anchor="middle">100Hz</text><text class="gl" x="339" y="349.6" text-anchor="middle">200Hz</text><text class="gl" x="428" y="349.6" text-anchor="middle">500Hz</text><text class="gl" x="497" y="349.6" text-anchor="middle">1kHz</text><text class="gl" x="563" y="349.6" text-anchor="middle">2kHz</text><text class="gl" x="659" y="349.6" text-anchor="middle">5kHz</text><text class="gl" x="727" y="349.6" text-anchor="middle">10kHz</text><text class="gl" x="794" y="349.6" text-anchor="middle">20kHz</text></svg>
<div class="gb" style="left:898px;top:327px;width:157px;height:281px"></div>
<div class="l" style="left:905px;top:320.1px;background:#f0f0f0;padding:0 1px">音量混合</div>
<div style="left:898px;top:334px;width:155px;height:115px;border:3px solid #c4202c"></div>
<div class="l" style="left:909.5px;top:344.2px;">音乐音量</div>
<div class="tb" style="left:1015px;top:339.5px;width:30px;height:17px"><div style="left:1px;top:0;height:16px;line-height:16px;font-size:12.3px;white-space:nowrap">负无穷</div></div>
<div class="btn" style="left:1015px;top:359.5px;width:30px;height:21px;line-height:18px;font-size:12px">+</div>
<div class="tr" style="left:910px;top:365.6px;width:90.5px;height:3px;"></div><svg class="th" preserveAspectRatio="none" style="left:909.6px;top:360px;height:16.8px" viewBox="0 0 10 17"><defs><linearGradient id="tg" x1="0" x2="1"><stop offset="0" stop-color="#fafafa"/><stop offset="1" stop-color="#d4d4d4"/></linearGradient></defs><path d="M1.5 0.5h7a1 1 0 0 1 1 1v10.5l-4.5 4.5l-4.5-4.5v-10.5a1 1 0 0 1 1-1z" fill="url(#tg)" stroke="#8a8c92" stroke-width="1"/></svg>
<div class="l" style="left:909.5px;top:401.8px;">话筒音量</div>
<div class="tb" style="left:1015px;top:395.5px;width:30px;height:17px"><div class="m" style="left:0.5px;top:1.5px;height:14px;line-height:14px">6.0dB</div></div>
<div class="btn" style="left:1015px;top:416.5px;width:30px;height:21px;line-height:18px;font-size:12px">+</div>
<div class="tr" style="left:910px;top:422.9px;width:90.5px;height:3px;"></div><svg class="th" preserveAspectRatio="none" style="left:991.1px;top:417px;height:16.8px" viewBox="0 0 10 17"><defs><linearGradient id="tg" x1="0" x2="1"><stop offset="0" stop-color="#fafafa"/><stop offset="1" stop-color="#d4d4d4"/></linearGradient></defs><path d="M1.5 0.5h7a1 1 0 0 1 1 1v10.5l-4.5 4.5l-4.5-4.5v-10.5a1 1 0 0 1 1-1z" fill="url(#tg)" stroke="#8a8c92" stroke-width="1"/></svg>
<div class="l" style="left:909.5px;top:463.6px;">回声音量</div>
<div class="tb" style="left:1015px;top:460px;width:30px;height:17px"><div class="m" style="left:0.5px;top:1.5px;height:14px;line-height:14px">-3.9dB</div></div>
<div class="btn" style="left:1015px;top:479px;width:30px;height:21px;line-height:18px;font-size:12px">+</div>
<div class="tr" style="left:910px;top:484.9px;width:90.5px;height:3px;"></div><svg class="th" preserveAspectRatio="none" style="left:935.4px;top:479.5px;height:16.8px" viewBox="0 0 10 17"><defs><linearGradient id="tg" x1="0" x2="1"><stop offset="0" stop-color="#fafafa"/><stop offset="1" stop-color="#d4d4d4"/></linearGradient></defs><path d="M1.5 0.5h7a1 1 0 0 1 1 1v10.5l-4.5 4.5l-4.5-4.5v-10.5a1 1 0 0 1 1-1z" fill="url(#tg)" stroke="#8a8c92" stroke-width="1"/></svg>
<div class="l" style="left:909.5px;top:530.2px;">混响音量</div>
<div class="tb" style="left:1015px;top:525px;width:30px;height:17px"><div class="m" style="left:0.5px;top:1.5px;height:14px;line-height:14px">-9.9dB</div></div>
<div class="btn" style="left:1015px;top:545px;width:30px;height:21px;line-height:18px;font-size:12px">+</div>
<div class="tr" style="left:910px;top:551.4px;width:90.5px;height:3px;"></div><svg class="th" preserveAspectRatio="none" style="left:922.9px;top:545.6px;height:16.8px" viewBox="0 0 10 17"><defs><linearGradient id="tg" x1="0" x2="1"><stop offset="0" stop-color="#fafafa"/><stop offset="1" stop-color="#d4d4d4"/></linearGradient></defs><path d="M1.5 0.5h7a1 1 0 0 1 1 1v10.5l-4.5 4.5l-4.5-4.5v-10.5a1 1 0 0 1 1-1z" fill="url(#tg)" stroke="#8a8c92" stroke-width="1"/></svg>
</body></html>
